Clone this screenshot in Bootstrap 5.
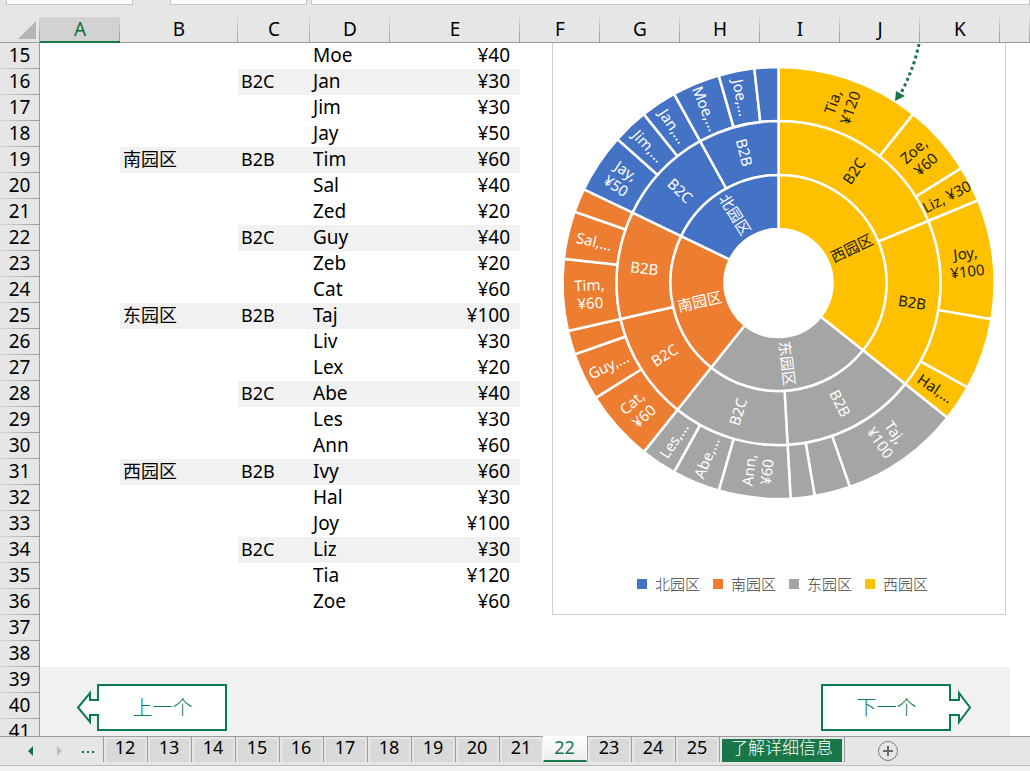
<!DOCTYPE html>
<html lang="zh-CN">
<head>
<meta charset="utf-8">
<meta name="viewport" content="width=device-width, initial-scale=1">
<title>旭日图</title>
<link href="https://cdn.jsdelivr.net/npm/bootstrap@5.3.0/dist/css/bootstrap.min.css" rel="stylesheet">
<style>
  :root { --chrome: #e6e6e6; --line: #9b9b9b; --excel: #187648; --shape: #0b7a53; }
  body { font-family: "Noto Sans", "Noto Sans CJK SC", sans-serif; font-size: 19px; line-height: 25px; color: #000; background: var(--chrome); }
  .grid .han, .grid .segment { font-size: 18px; }
  .han { font-weight: 300; }

  .formula-bar { height: 17px; }
  .formula-bar .field { height: 5px; border: 1px solid #c6c6c6; border-top: 0; background: #fdfdfd; border-radius: 0; padding: 0; }
  .name-field { width: 127px; margin-left: 6px; }
  .fx-field { width: 137px; margin-left: 37px; }

  .sheet { background: #fff; }
  .grid { table-layout: fixed; border-collapse: separate; border-spacing: 0; width: 100%; }
  .grid th, .grid td { height: 26px; padding: 0 3px; white-space: nowrap; font-weight: 400; line-height: 25px; }
  .grid th { background: var(--chrome); text-align: center; }
  .grid thead th { border-bottom: 1px solid var(--line); background: linear-gradient(#d8d8d8, var(--line)) right / 1px 100% no-repeat var(--chrome); }
  .grid thead th.picked { background-color: #d2d2d2; color: #136c40; border-bottom: 2px solid var(--excel); line-height: 24px; }
  .grid tbody th { border-right: 1px solid var(--line); background: linear-gradient(90deg, #d8d8d8, var(--line)) bottom / 100% 1px no-repeat var(--chrome); padding: 0; }
  .grid tbody th, .grid tbody td { line-height: 24px; padding-bottom: 2px; }
  .grid td.amount { text-align: right; padding-right: 10px; }
  .grid td.tint { background: #f1f1f1; }
  .grid td.tint-edge { background: linear-gradient(#f1f1f1, #f1f1f1) left / 10px 100% no-repeat; }

  .chart { left: 552px; top: 26px; width: 454px; height: 572px; border: 1px solid #d0d0d0; border-top: 0; background: #fff; }
  .sunburst { font-size: 15px; font-weight: 400; }
  .legend-row { gap: 13px; bottom: 18px; left: 84px; font-size: 15px; line-height: 24px; color: #404040; font-weight: 300; }
  .swatch { width: 10px; height: 10px; }

  .step { top: 667px; width: 152px; height: 47px; border: 0; padding: 0; background: none; color: var(--shape); font-size: 20px; line-height: 47px; }
  .step svg { inset: 0; }
  .step-prev { left: 76px; padding-left: 21px; }
  .step-next { left: 821px; padding-right: 21px; }

  .tab-strip { height: 35px; border-top: 1px solid var(--line); background: linear-gradient(var(--chrome) 28px, #bdbdbd 28px, #bdbdbd 29px, #f1f1f1 29px); font-size: 18px; }
  .tab-strip button { border: 0; padding: 0; background: none; color: #000; }
  .tab-strip .sheet-tab { width: 44px; height: 25px; border-left: 1px solid var(--line); padding: 0 1px 6px 0; background: linear-gradient(#d9d9d9, #d9d9d9) 2px 2px / 39px 23px no-repeat; line-height: 18px; }
  .tab-strip .sheet-tab.current { margin-top: -1px; height: 26px; padding-bottom: 3px; color: var(--excel); background: linear-gradient(#fff, #ececec); border: 1px solid #fff; border-top: 0; border-bottom: 2px solid var(--excel); }
  .tab-strip .learn { width: 126px; height: 25px; padding: 0 2px; border-left: 1px solid var(--line); border-right: 1px solid var(--line); }
  .learn span { display: block; height: 23px; margin-top: 2px; background: var(--excel); color: #fff; font-size: 17px; line-height: 17px; }
  .arrows { width: 103px; height: 28px; }
</style>
</head>
<body class="vh-100 d-flex flex-column overflow-hidden">

<div class="formula-bar d-flex flex-shrink-0">
  <input class="field name-field" type="text" aria-label="名称框">
  <div class="field fx-field"></div>
  <input class="field flex-grow-1 ms-1" type="text" aria-label="编辑栏">
</div>

<main class="sheet flex-grow-1 position-relative overflow-hidden">
  <table class="grid">
    <colgroup>
      <col style="width:40px"><col style="width:80px"><col style="width:118px"><col style="width:72px"><col style="width:80px"><col style="width:130px">
      <col style="width:80px"><col style="width:80px"><col style="width:80px"><col style="width:80px"><col style="width:80px"><col style="width:80px"><col>
    </colgroup>
    <thead>
      <tr>
        <th class="p-0"><svg class="d-block" width="39" height="25" aria-hidden="true"><path d="M36 4V22H18Z" fill="#b5b5b5"/></svg></th>
        <th class="picked">A</th><th>B</th><th>C</th><th>D</th><th>E</th><th>F</th><th>G</th><th>H</th><th>I</th><th>J</th><th>K</th><th></th>
      </tr>
    </thead>
    <tbody id="rows"></tbody>
  </table>

  <section class="chart position-absolute" aria-label="旭日图">
    <svg id="sunburst" class="sunburst d-block" width="452" height="500" viewBox="1 0 452 500"></svg>
    <div class="legend-row d-flex position-absolute" id="legend"></div>
  </section>

  <button type="button" class="step step-prev position-absolute">
    <svg class="position-absolute" width="152" height="47" aria-hidden="true"><path d="M22 1H150V46H22V31H14V38L2 23.500L14 9V16H22Z" fill="#fff" stroke="#0b7a53" stroke-width="2"/></svg>
    <span class="position-relative han">上一个</span>
  </button>
  <button type="button" class="step step-next position-absolute">
    <svg class="position-absolute" width="152" height="47" aria-hidden="true"><path d="M129 1H1V46H129V31H138V38L149 23.500L138 9V16H129Z" fill="#fff" stroke="#0b7a53" stroke-width="2"/></svg>
    <span class="position-relative han">下一个</span>
  </button>
</main>

<nav class="tab-strip d-flex flex-shrink-0" aria-label="工作表">
  <div class="arrows d-flex">
    <button type="button" aria-label="上一张" class="ms-4"><svg class="d-block" width="14" height="28"><path d="M9 9V19L4 14Z" fill="#10713f"/></svg></button>
    <button type="button" aria-label="下一张" class="ms-3"><svg class="d-block" width="14" height="28"><path d="M3 9V19L8 14Z" fill="#bdbdbd"/></svg></button>
    <button type="button" aria-label="更多" class="ms-2"><svg class="d-block" width="26" height="28"><path d="M6 14h2v2h-2zM11 14h2v2h-2zM16 14h2v2h-2z" fill="#10713f"/></svg></button>
  </div>
  <div class="d-flex" id="tabs"></div>
  <button type="button" class="learn"><span class="han">了解详细信息</span></button>
  <button type="button" aria-label="新工作表" class="ms-4 align-self-start">
    <svg class="d-block ms-2" width="22" height="28"><circle cx="11" cy="14" r="9.500" fill="none" stroke="#7a7a7a"/><path d="M6 14H16M11 9V19" stroke="#6a6a6a" stroke-width="2"/></svg>
  </button>
</nav>

<script src="https://cdn.jsdelivr.net/npm/bootstrap@5.3.0/dist/js/bootstrap.bundle.min.js"></script>
<script>
  // Sheet rows, starting at row 15: region, segment, customer, amount
  const records = [
    ['', '', 'Moe', 40], ['', 'B2C', 'Jan', 30], ['', '', 'Jim', 30], ['', '', 'Jay', 50],
    ['南园区', 'B2B', 'Tim', 60], ['', '', 'Sal', 40], ['', '', 'Zed', 20],
    ['', 'B2C', 'Guy', 40], ['', '', 'Zeb', 20], ['', '', 'Cat', 60],
    ['东园区', 'B2B', 'Taj', 100], ['', '', 'Liv', 30], ['', '', 'Lex', 20],
    ['', 'B2C', 'Abe', 40], ['', '', 'Les', 30], ['', '', 'Ann', 60],
    ['西园区', 'B2B', 'Ivy', 60], ['', '', 'Hal', 30], ['', '', 'Joy', 100],
    ['', 'B2C', 'Liz', 30], ['', '', 'Tia', 120], ['', '', 'Zoe', 60]
  ];
  let html = '';
  for (let n = 15; n <= 41; n++) {
    const [region, segment, name, amount] = records[n - 15] || ['', '', '', ''];
    const footer = n >= 39;
    const foot = footer ? 'tint' : '';
    const regionTint = region ? 'tint' : foot;
    const rest = segment ? 'tint' : foot;
    html += `<tr><th scope="row">${n}</th><td class="${foot}"></td><td class="han ${regionTint}">${region}</td>` +
      `<td class="segment ${rest}">${segment}</td><td class="${rest}">${name}</td><td class="amount ${rest}">${amount ? '¥' + amount : ''}</td>` +
      `<td class="${foot}"></td>`.repeat(6) + `<td class="${footer ? 'tint-edge' : ''}"></td></tr>`;
  }
  document.getElementById('rows').innerHTML = html;

  // Sunburst, clockwise from twelve o'clock. Leaves: [label lines, value]
  const tree = [
    { name: '西园区', fill: '#ffc000', ink: '#1c1c1c', parts: [
      ['B2C', [['Tia,|¥120', 120], ['Zoe,|¥60', 60], ['Liz, ¥30', 30]]],
      ['B2B', [['Joy,|¥100', 100], ['', 60], ['Hal,…', 30]]]] },
    { name: '东园区', fill: '#a5a5a5', ink: '#fff', parts: [
      ['B2B', [['Taj,|¥100', 100], ['', 30], ['', 20]]],
      ['B2C', [['Ann,|¥60', 60], ['Abe,…', 40], ['Les,…', 30]]]] },
    { name: '南园区', fill: '#ed7d31', ink: '#fff', parts: [
      ['B2C', [['Cat,|¥60', 60], ['Guy,…', 40], ['', 20]]],
      ['B2B', [['Tim,|¥60', 60], ['Sal,…', 40], ['', 20]]]] },
    { name: '北园区', fill: '#4472c4', ink: '#fff', parts: [
      ['B2C', [['Jay,|¥50', 50], ['Jim,…', 30], ['Jan,…', 30]]],
      ['B2B', [['Moe,…', 40], ['Joe,…', 30], ['', 20]]]] }
  ];
  const cx = 226.5, cy = 240, ring = 54, total = 1120;
  const at = (r, v) => {
    const a = v / total * 2 * Math.PI;
    return (cx + r * Math.sin(a)).toFixed(2) + ' ' + (cy - r * Math.cos(a)).toFixed(2);
  };
  let arcs = '', labels = '';
  function slice(level, from, size, label, group) {
    const r0 = ring * level, r1 = r0 + ring, to = from + size;
    arcs += `<path d="M${at(r0, from)}L${at(r1, from)}A${r1} ${r1} 0 0 1 ${at(r1, to)}L${at(r0, to)}A${r0} ${r0} 0 0 0 ${at(r0, from)}Z" fill="${group.fill}"/>`;
    if (!label) return;
    const deg = (from + size / 2) / total * 360;
    const turn = deg < 180 ? deg - 90 : deg - 270;
    const [x, y] = at(r0 + ring / 2, from + size / 2).split(' ');
    const lines = label.split('|');
    labels += `<g transform="translate(${x} ${y}) rotate(${turn.toFixed(2)})" fill="${group.ink}">` +
      lines.map((t, i) => `<text text-anchor="middle" y="${6 + (i - (lines.length - 1) / 2) * 18}">${t}</text>`).join('') + '</g>';
  }
  let pos = 0;
  for (const g of tree) {
    const start = pos;
    for (const [seg, leaves] of g.parts) {
      const segStart = pos;
      for (const [label, value] of leaves) { slice(3, pos, value, label, g); pos += value; }
      slice(2, segStart, pos - segStart, seg, g);
    }
    slice(1, start, pos - start, g.name, g);
  }
  const pointer = '<path d="M367 1Q362 25 349 50" fill="none" stroke="#187648" stroke-width="3" stroke-dasharray="3 3"/><path d="M343 58L344 48L353 53Z" fill="#187648"/>';
  document.getElementById('sunburst').innerHTML = `<g stroke="#fff" stroke-width="2.500">${arcs}</g>${labels}${pointer}`;

  document.getElementById('legend').innerHTML = [...tree].reverse()
    .map(g => `<div class="d-flex align-items-center gap-2"><span class="swatch" style="background:${g.fill}"></span>${g.name}</div>`).join('');

  let tabs = '';
  for (let n = 12; n <= 25; n++) tabs += `<button type="button" class="sheet-tab${n === 22 ? ' current' : ''}">${n}</button>`;
  document.getElementById('tabs').innerHTML = tabs;
</script>
</body>
</html>
